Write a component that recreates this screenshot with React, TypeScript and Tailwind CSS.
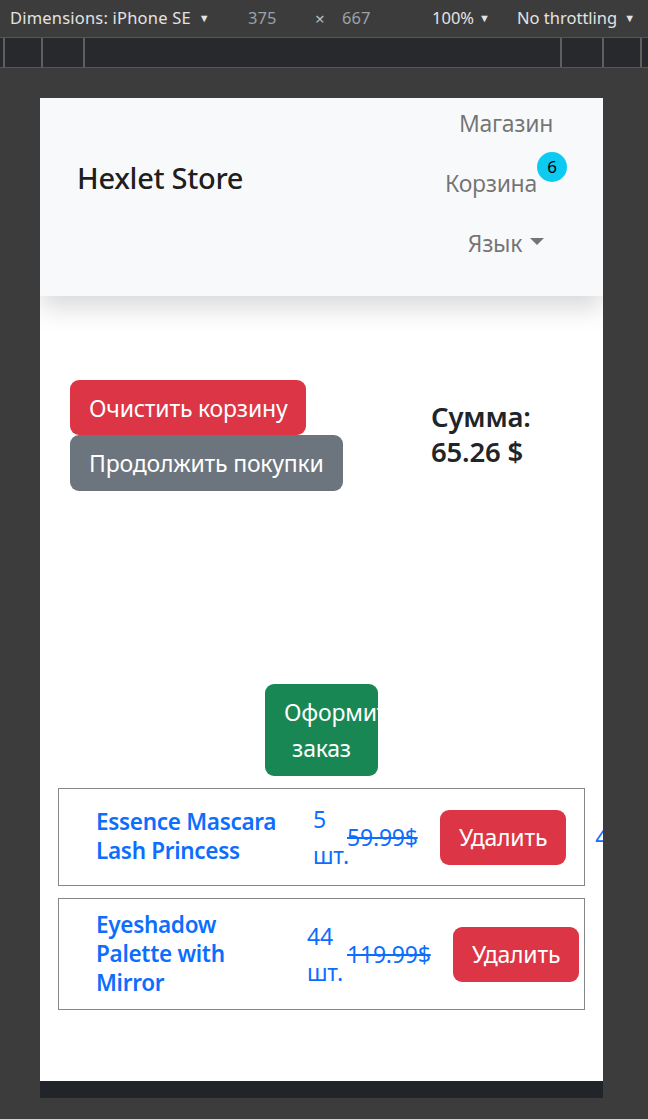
import React from 'react'

const font = "font-['Noto_Sans','Liberation_Sans',sans-serif]"

function DevToolbar() {
  return (
    <div className="flex items-center h-[37px] text-[16.5px] text-[#e3e3e3] bg-[#3c3c3c]">
      <div className="w-[248px] pl-[10px] flex items-center gap-[8px]">
        <span className="tracking-[0.2px]">Dimensions: iPhone SE</span>
        <span className="text-[11px]">▼</span>
      </div>
      <div className="w-[67px] text-[#9aa0a6]">375</div>
      <div className="w-[27px] text-[#bdbdbd] text-[17px]">×</div>
      <div className="w-[90px] text-[#9aa0a6]">667</div>
      <div className="w-[85px] flex items-center gap-[5px]">
        <span>100%</span>
        <span className="text-[11px]">▼</span>
      </div>
      <div className="flex items-center gap-[7px]">
        <span>No throttling</span>
        <span className="text-[11px]">▼</span>
      </div>
    </div>
  )
}

function Ruler() {
  const tick = 'w-[2px] h-full bg-[#5f5f5f]'
  return (
    <div className="flex h-[31px] bg-[#28292c] border-y border-[#565656]">
      <div className="w-[3px]" />
      <div className={tick} />
      <div className="w-[36px]" />
      <div className={tick} />
      <div className="w-[40px]" />
      <div className={tick} />
      <div className="w-[475px]" />
      <div className={tick} />
      <div className="w-[40px]" />
      <div className={tick} />
      <div className="w-[36px]" />
      <div className={tick} />
    </div>
  )
}

function Navbar() {
  return (
    <nav className="relative z-10 h-[198px] shrink-0 bg-[#f8f9fa] shadow-[0_12px_24px_rgba(0,0,0,0.15)] flex justify-between">
      <div className="pl-[37px] pt-[57px] text-[29px] leading-[45px] font-medium tracking-[-0.3px] text-black/90">Hexlet Store</div>
      <div className="mr-[27px] w-[140px] -mt-[5px] flex flex-col items-center text-[23px] tracking-[-0.3px] text-black/55">
        <div className="h-[60px] flex items-center">Магазин</div>
        <div className="h-[60px] flex items-center">
          <span>Корзина</span>
          <span className="mb-[33px] w-[30px] h-[30px] rounded-full bg-[#0dcaf0] text-black text-[17px] flex items-center justify-center">
            6
          </span>
        </div>
        <div className="h-[60px] flex items-center gap-[8px]">
          <span>Язык</span>
          <span className="mb-[4px] w-0 h-0 border-x-[7px] border-x-transparent border-t-[7px] border-t-[#757575]" />
        </div>
      </div>
    </nav>
  )
}

interface CartItem {
  title: string
  qty: number
  price: string
  total: string
  titleW: string
  qtyW: string
  priceW: string
}

// column widths follow the squeezed flex row of the screenshot
const items: CartItem[] = [
  { title: 'Essence Mascara Lash Princess', qty: 5, price: '59.99$', total: '49.59$', titleW: 'w-[210px] mr-[7px]', qtyW: 'w-[34px]', priceW: 'w-[93px]' },
  { title: 'Eyeshadow Palette with Mirror', qty: 44, price: '119.99$', total: '112.39$', titleW: 'w-[170px] mr-[41px]', qtyW: 'w-[40px]', priceW: 'w-[106px]' },
]

function CartRow({ item }: { item: CartItem }) {
  return (
    <div className="mx-[18px] mt-[12px] border border-[#868686] py-[12px] pl-[37px] flex items-center text-[23px] tracking-[-0.2px] text-[#0d6efd]">
      <div className={`${item.titleW} shrink-0 text-[22.5px] font-semibold tracking-[-0.3px] leading-[28.8px]`}>{item.title}</div>
      <div className={`${item.qtyW} shrink-0 leading-[36px]`}>{item.qty} шт.</div>
      <div className={`${item.priceW} shrink-0 leading-[36px] line-through`}>{item.price}</div>
      <button className="shrink-0 bg-[#dc3545] text-white rounded-[9px] px-[19px] h-[55px] leading-[36px]">
        Удалить
      </button>
      <div className="shrink-0 ml-[29px] whitespace-nowrap">{item.total}</div>
    </div>
  )
}

export default function App() {
  return (
    <div className={`${font} w-[648px] h-[1119px] bg-[#3c3c3c] overflow-hidden`}>
      <DevToolbar />
      <Ruler />
      <div className="pt-[30px] pl-[40px]">
        <div className="w-[563px] h-[1000px] bg-white overflow-hidden flex flex-col">
          <Navbar />
          <main className="flex-1">
            <div className="mt-[84px] flex items-center">
              <div className="w-[391px] pl-[30px] flex flex-col items-start text-[23px] tracking-[-0.2px] text-white">
                <button className="bg-[#dc3545] rounded-[9px] px-[19px] h-[55px] leading-[36px]">Очистить корзину</button>
                <button className="bg-[#6c757d] rounded-[9px] px-[19px] h-[56px] leading-[36px]">Продолжить покупки</button>
              </div>
              <div className="mb-[4px] text-[27.5px] leading-[35px] font-semibold tracking-[-0.2px] text-[#212529]">
                Сумма:
                <br />
                65.26 $
              </div>
            </div>
            <div className="mt-[193px] flex justify-center">
              <button className="w-[113px] overflow-hidden bg-[#198754] text-white text-[23px] tracking-[-0.2px] leading-[36px] rounded-[9px] px-[19px] py-[10px] text-center">
                Оформить заказ
              </button>
            </div>
            {items.map((item) => (
              <CartRow key={item.title} item={item} />
            ))}
          </main>
          <div className="h-[17px] bg-[#212529]" />
        </div>
      </div>
    </div>
  )
}
